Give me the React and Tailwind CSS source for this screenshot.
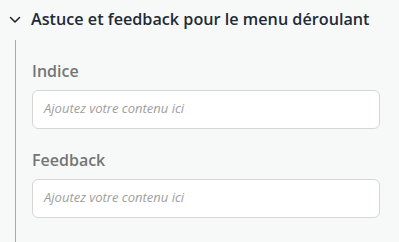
import React from 'react';

function Field({ label }) {
  return (
    <div>
      <div className="text-[16px] font-semibold leading-[22px] text-[#757575]">{label}</div>
      <div className="mt-[8px] h-[39px] rounded-[6px] border border-[#d6d6d6] bg-white px-[11px] pt-[8px] text-[13px] italic leading-[18px] text-[#9e9e9e]">
        Ajoutez votre contenu ici
      </div>
    </div>
  );
}

export default function App() {
  return (
    <div className="h-[242px] w-[399px] overflow-hidden bg-[#f7f9f9] font-['Open_Sans',sans-serif]">
      <div className="flex items-center pt-[7px] pl-[9px]">
        <svg width="12" height="8" viewBox="0 0 12 8" fill="none" className="mt-[2px]">
          <path d="M1.5 1.5 L6 6 L10.5 1.5" stroke="#1f2a37" strokeWidth="1.6" strokeLinecap="round" strokeLinejoin="round" />
        </svg>
        <h2 className="ml-[10px] text-[16.2px] font-semibold leading-[24px] text-[#1f2a37]">
          Astuce et feedback pour le menu déroulant
        </h2>
      </div>
      <div className="ml-[15px] mt-[9px] flex h-[300px] border-l border-[#9fc638] pl-[16px] pr-[19px]">
        <div className="flex w-full flex-col gap-[20px] pt-[20px]">
          <Field label="Indice" />
          <Field label="Feedback" />
        </div>
      </div>
    </div>
  );
}
